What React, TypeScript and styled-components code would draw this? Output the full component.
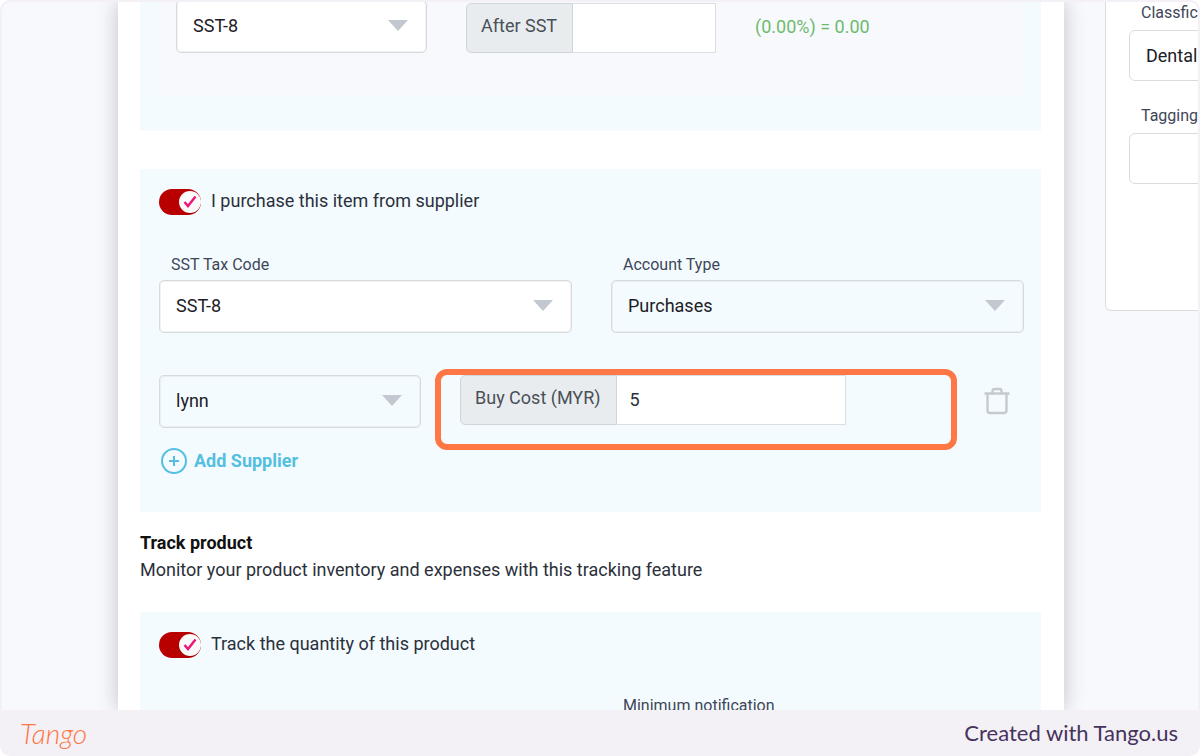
import React from "react";
import styled, { createGlobalStyle } from "styled-components";

const GlobalStyle = createGlobalStyle`
  *, *::before, *::after { box-sizing: border-box; }
  body {
    margin: 0;
    background: #fff;
    font-family: Roboto, "Liberation Sans", sans-serif;
    font-size: 18px;
    line-height: 26px;
    color: #2b303b;
  }
  button, input, select { font: inherit; color: inherit; margin: 0; }
`;

const Frame = styled.div`
  display: flex;
  flex-direction: column;
  height: 100vh;
  padding: 2px 2px 0;
  background: #f3f0f6;
  border-radius: 10px;
  overflow: hidden;
`;

const Screen = styled.div`
  display: flex;
  flex: 1;
  min-height: 0;
  padding-left: 116px;
  background: #f8f9fd;
  border-radius: 8px 8px 0 0;
  overflow: hidden;
`;

const Sheet = styled.main`
  flex: 1;
  min-width: 0;
  padding: 0 23px 0 22px;
  background: #fff;
  box-shadow: 0 0 20px rgba(50, 55, 60, 0.28);
`;

const Section = styled.section<{ $first?: boolean }>`
  padding: ${(p) => (p.$first ? "0 18px 35px 19px" : "19px 17px 38px 19px")};
  background: #f3fbff;
`;

const PricePanel = styled.div`
  display: flex;
  align-items: flex-end;
  height: 94px;
  padding: 0 17px 43px;
  background: #f8f9fd;
`;

const PurchaseBlock = styled.div`
  margin: 38px 0 18px;
`;

const SelectBox = styled.div<{ $width?: string; $filled?: boolean }>`
  display: grid;
  align-items: center;
  flex: none;
  width: ${(p) => p.$width ?? "100%"};
  height: 53px;
  border: 1px solid #d6dadd;
  border-radius: 5px;
  background: ${(p) => (p.$filled ? "#fff" : "transparent")};
  box-shadow: inset 0 0 0 1px rgba(214, 218, 221, 0.35);

  > select {
    grid-area: 1 / 1;
    width: 100%;
    height: 100%;
    padding: 0 48px 2px 16px;
    border: 0;
    background: transparent;
    appearance: none;
    outline: none;
    color: #1d2026;
  }
  > svg {
    grid-area: 1 / 1;
    justify-self: end;
    margin: 0 18px 2px 0;
    pointer-events: none;
  }
`;

const InputGroup = styled.div<{ $width: string }>`
  display: flex;
  flex: none;
  width: ${(p) => p.$width};
  height: 50px;
`;

const PriceInput = styled.div`
  padding-left: 39px;
`;

const Addon = styled.label`
  display: flex;
  align-items: center;
  padding: 0 15px 4px 14px;
  border: 1px solid #d0d5da;
  border-radius: 5px 0 0 5px;
  background: #e9ecef;
  color: #495057;
  white-space: nowrap;
`;

const GroupInput = styled.input`
  flex: 1;
  min-width: 0;
  padding: 0 13px;
  border: 1px solid #dcdfe1;
  border-left: 0;
  border-radius: 0;
  background: #fff;
  outline: none;
`;

const Result = styled.output`
  padding: 0 0 13px 39px;
  color: #6dbb6d;
`;

const ToggleLabel = styled.label`
  display: flex;
  align-items: center;
  gap: 9px;
  height: 28px;
`;

const ToggleBox = styled.span`
  display: grid;
  align-items: center;
  width: 43px;
  height: 26px;
  > * { grid-area: 1 / 1; }
  > svg { justify-self: end; }
`;

const ToggleInput = styled.input`
  appearance: none;
  width: 42px;
  height: 26px;
  border-radius: 13px;
  background: #b90000;
`;

const ToggleText = styled.span`
  padding-bottom: 2px;
`;

const FieldGrid = styled.div<{ $compact?: boolean }>`
  display: grid;
  grid-template-columns: 1fr 1fr;
  gap: 39px;
  margin-top: ${(p) => (p.$compact ? "37px" : "39px")};
`;

const Field = styled.div`
  display: flex;
  flex-direction: column;
  gap: 5px;
`;

const FieldLabel = styled.label`
  padding-left: 12px;
  font-size: 16px;
  line-height: 20px;
  color: #3f4658;
  white-space: nowrap;
`;

const SupplierRow = styled.div`
  display: flex;
  align-items: flex-start;
  margin-top: 42px;
`;

const CostCell = styled.div`
  position: relative;
  flex: 1;
  padding-left: 39px;
`;

const Highlight = styled.div`
  position: absolute;
  inset: -6px 27px -25px 14px;
  border: 6px solid #ff7744;
  border-radius: 12px;
  pointer-events: none;
`;

const IconButton = styled.button`
  display: flex;
  padding: 12px 14px 0 0;
  border: 0;
  background: none;
`;

const AddButton = styled.button`
  display: flex;
  align-items: center;
  gap: 7px;
  margin-top: 20px;
  padding: 0 2px;
  border: 0;
  background: none;
  color: #55bfe0;
  font-weight: 700;
  line-height: 26px;
`;

const TrackTitle = styled.h2`
  margin: 0 0 1px;
  font-size: 18px;
  line-height: 26px;
  font-weight: 700;
  color: #111;
`;

const TrackText = styled.p`
  margin: 0 0 29px;
`;

const Aside = styled.aside`
  flex: none;
  width: 134px;
  padding-left: 41px;
  overflow: hidden;
`;

const AsideCard = styled.div`
  width: 240px;
  height: 309px;
  padding: 1px 23px 0;
  border: 1px solid #dadcdd;
  border-top: 0;
  border-radius: 0 0 6px 6px;
  background: #fff;
`;

const AsideField = styled.div`
  display: flex;
  flex-direction: column;
  gap: 7px;
  margin-bottom: 25px;
`;

const AsideInput = styled.input`
  width: 100%;
  height: 51px;
  padding: 0 16px;
  border: 1px solid #d9dcde;
  border-radius: 6px;
  background: #fff;
  outline: none;
  color: #1d2026;
`;

const Footer = styled.footer`
  display: flex;
  align-items: center;
  justify-content: space-between;
  flex: none;
  height: 46px;
  padding: 0 20px 0 18px;
  font-family: Lato, sans-serif;
  font-size: 22px;
  color: #46335c;
`;

const Wordmark = styled.span`
  font-size: 28px;
  font-style: italic;
  font-weight: 300;
  color: #ff7744;
`;

const Caret = () => (
  <svg width="20" height="11" viewBox="0 0 20 11" aria-hidden="true">
    <path d="M0 0H20L10 11Z" fill="#c3c8d0" />
  </svg>
);

type DropdownProps = { id: string; value: string; label?: string; width?: string; filled?: boolean };

const Dropdown = ({ id, value, label, width, filled }: DropdownProps) => (
  <SelectBox $width={width} $filled={filled}>
    <select id={id} aria-label={label} defaultValue={value}>
      <option>{value}</option>
    </select>
    <Caret />
  </SelectBox>
);

const Toggle = ({ id, children }: { id: string; children: React.ReactNode }) => (
  <ToggleLabel htmlFor={id}>
    <ToggleBox>
      <ToggleInput type="checkbox" id={id} defaultChecked />
      <svg width="24" height="26" viewBox="0 0 24 26" aria-hidden="true">
        <circle cx="12" cy="14" r="11" fill="#000" opacity=".13" />
        <circle cx="12" cy="13" r="11" fill="#fafafa" />
        <path d="M6.500 13L10 17L17.500 7.500" fill="none" stroke="#f0147a" strokeWidth="2.400" />
      </svg>
    </ToggleBox>
    <ToggleText>{children}</ToggleText>
  </ToggleLabel>
);

export default function App() {
  return (
    <>
      <GlobalStyle />
      <Frame>
        <Screen>
          <Sheet>
            <Section $first>
              <PricePanel>
                <Dropdown id="sale-tax" label="Sale tax code" value="SST-8" width="251px" filled />
                <PriceInput>
                  <InputGroup $width="250px">
                    <Addon htmlFor="after-sst">After SST</Addon>
                    <GroupInput id="after-sst" type="text" />
                  </InputGroup>
                </PriceInput>
                <Result>(0.00%) = 0.00</Result>
              </PricePanel>
            </Section>

            <PurchaseBlock>
              <Section>
                <Toggle id="purchase">I purchase this item from supplier</Toggle>
                <FieldGrid>
                  <Field>
                    <FieldLabel htmlFor="tax-code">SST Tax Code</FieldLabel>
                    <Dropdown id="tax-code" value="SST-8" filled />
                  </Field>
                  <Field>
                    <FieldLabel htmlFor="account-type">Account Type</FieldLabel>
                    <Dropdown id="account-type" value="Purchases" />
                  </Field>
                </FieldGrid>
                <SupplierRow>
                  <Dropdown id="supplier" label="Supplier" value="lynn" width="262px" />
                  <CostCell>
                    <InputGroup $width="386px">
                      <Addon htmlFor="buy-cost">Buy Cost (MYR)</Addon>
                      <GroupInput id="buy-cost" type="text" defaultValue="5" />
                    </InputGroup>
                    <Highlight />
                  </CostCell>
                  <IconButton type="button" aria-label="Remove supplier">
                    <svg width="26" height="28" viewBox="0 0 26 28" fill="none" stroke="#c6cad0" strokeWidth="2.400" aria-hidden="true">
                      <path d="M0.500 6.500H25.500M3.500 6.500V23.500Q3.500 26 6 26H20Q22.500 26 22.500 23.500V6.500M8.500 6.500V4Q8.500 2 10.500 2H15.500Q17.500 2 17.500 4V6.500" />
                    </svg>
                  </IconButton>
                </SupplierRow>
                <AddButton type="button">
                  <svg width="26" height="26" viewBox="0 0 26 26" fill="none" stroke="#55bfe0" strokeWidth="2" aria-hidden="true">
                    <circle cx="13" cy="13" r="12" />
                    <path d="M8 13H18M13 8V18" />
                  </svg>
                  Add Supplier
                </AddButton>
              </Section>
            </PurchaseBlock>

            <TrackTitle>Track product</TrackTitle>
            <TrackText>Monitor your product inventory and expenses with this tracking feature</TrackText>

            <Section>
              <Toggle id="track">Track the quantity of this product</Toggle>
              <FieldGrid $compact>
                <span />
                <Field>
                  <FieldLabel htmlFor="minimum">Minimum notification</FieldLabel>
                  <Dropdown id="minimum" value="" filled />
                </Field>
              </FieldGrid>
            </Section>
          </Sheet>

          <Aside>
            <AsideCard>
              <AsideField>
                <FieldLabel htmlFor="class">Classfication</FieldLabel>
                <AsideInput id="class" defaultValue="Dental" />
              </AsideField>
              <AsideField>
                <FieldLabel htmlFor="tagging">Tagging</FieldLabel>
                <AsideInput id="tagging" />
              </AsideField>
            </AsideCard>
          </Aside>
        </Screen>
        <Footer>
          <Wordmark>Tango</Wordmark>
          <span>Created with Tango.us</span>
        </Footer>
      </Frame>
    </>
  );
}
